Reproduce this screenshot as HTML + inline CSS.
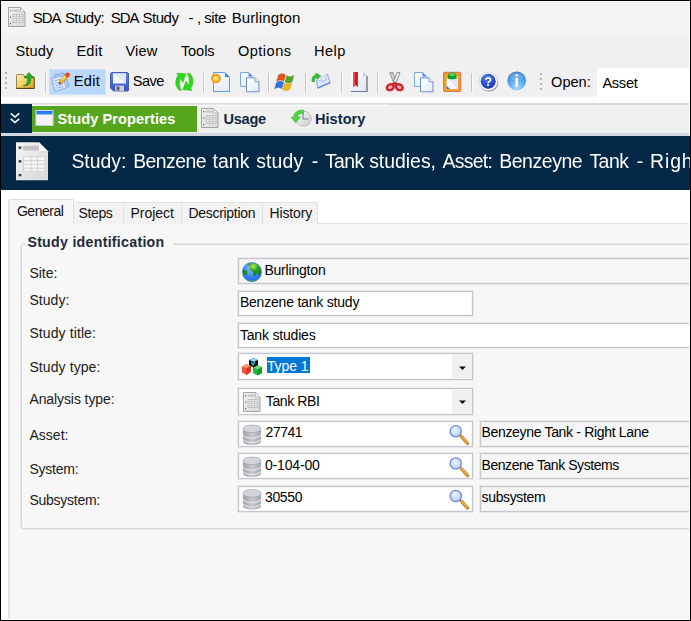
<!DOCTYPE html>
<html>
<head>
<meta charset="utf-8">
<title>SDA Study</title>
<style>
html,body{margin:0;padding:0;}
body{width:691px;height:621px;overflow:hidden;background:#f7f7f7;font-family:"Liberation Sans",sans-serif;color:#000;}
#win{position:relative;width:691px;height:621px;overflow:hidden;background:#fff;}
.a{position:absolute;box-sizing:border-box;}
.t{position:absolute;white-space:nowrap;line-height:1;}
#frame{position:absolute;left:0;top:0;width:689px;height:619px;border:1px solid #000;z-index:50;}
.wl{position:absolute;background:#fff;z-index:48;}
.sep{position:absolute;top:73px;width:1px;height:19px;background:#c6c6c6;box-shadow:1px 0 0 #fbfbfb;}
.inp{position:absolute;box-sizing:border-box;border:1px solid #c6c6cd;background:#fff;box-shadow:0 0 0 1px rgba(198,198,208,0.28),inset 0 0 0 1px rgba(198,198,208,0.18);}
.ro{background:#f6f6f6;}
.ptab{position:absolute;box-sizing:border-box;top:202px;height:22px;background:#f2f2f2;border:1px solid #e1e1e1;border-bottom:none;}
svg{position:absolute;overflow:visible;}
#soft{position:absolute;left:0;top:0;width:691px;height:621px;filter:blur(0.4px);}
.w{position:absolute;top:0;white-space:nowrap;line-height:1;}

</style>
</head>
<body>
<div id="win">
<div id="soft">
<div class="a" style="left:0;top:0;width:691px;height:34px;background:#f3f3f3"></div>
<div class="a" style="left:0;top:34px;width:691px;height:63px;background:linear-gradient(#f3f3f3,#f0f0f0 5px)"></div>
<div class="a" style="left:0;top:97px;width:691px;height:6px;background:#fff"></div>
<div class="a" style="left:0;top:103px;width:691px;height:33px;background:#f0f0f0;border-top:2px solid #d7dade;border-bottom:3px solid #d3d9df"></div>
<div class="a" style="left:0;top:104px;width:387px;height:1px;background:#e4e6e8"></div>
<div class="a" style="left:0;top:105px;width:387px;height:1px;background:#f9f9f9"></div>
<div class="a" style="left:0;top:136px;width:691px;height:54px;background:#042846"></div>
<div class="a" style="left:0;top:190px;width:691px;height:34px;background:#fff"></div>
<!-- toolbar -->
<div class="a" style="left:49px;top:69px;width:57px;height:26px;background:#b9d8fb;border:1px solid #cde3fb"></div>
<div class="a" style="left:597px;top:68px;width:94px;height:30px;background:#fff"></div>
<div class="sep" style="left:45px"></div>
<div class="sep" style="left:203px"></div>
<div class="sep" style="left:268px"></div>
<div class="sep" style="left:305px"></div>
<div class="sep" style="left:341px"></div>
<div class="sep" style="left:377px"></div>
<div class="sep" style="left:471px"></div>
<!-- nav -->
<div class="a" style="left:0;top:104px;width:32px;height:29px;background:#042846"></div>
<div class="a" style="left:32px;top:106px;width:165px;height:26px;background:#56a61d"></div>
<!-- page + tabs -->
<div class="a" style="left:8px;top:223px;width:690px;height:400px;background:#f7f7f7;border:1px solid #e0e0e0;border-left:2px solid #e3e5e8"></div>
<div class="ptab" style="left:73px;width:51px"></div>
<div class="ptab" style="left:123px;width:59px"></div>
<div class="ptab" style="left:181px;width:82px"></div>
<div class="ptab" style="left:262px;width:56px"></div>
<div class="a" style="left:8px;top:199px;width:66px;height:26px;background:#f7f7f7;border:1px solid #dedede;border-left:2px solid #e3e5e8;border-bottom:none;border-radius:2px 2px 0 0"></div>
<!-- group box -->
<div class="a" style="left:20px;top:243px;width:690px;height:287px;border:1px solid #e6e8ec;border-radius:4px;box-shadow:inset 0 0 0 1px #d4d8de"></div>
<div class="a" style="left:25px;top:240px;width:148px;height:8px;background:#f7f7f7"></div>
<!-- fields -->
<div class="inp ro" style="left:238px;top:258px;width:470px;height:26px"></div>
<div class="inp" style="left:238px;top:291px;width:235px;height:25px"></div>
<div class="inp" style="left:238px;top:323px;width:470px;height:25px"></div>
<div class="inp" style="left:238px;top:353px;width:235px;height:27px"></div>
<div class="a" style="left:452px;top:354px;width:20px;height:25px;background:#f0f0f0"></div>
<div class="a" style="left:267px;top:357px;width:42.500px;height:16px;background:#0078d7"></div>
<div class="inp" style="left:238px;top:388px;width:235px;height:27px"></div>
<div class="a" style="left:452px;top:389px;width:20px;height:25px;background:#f0f0f0"></div>
<div class="inp" style="left:238px;top:421px;width:235px;height:26px"></div>
<div class="inp" style="left:238px;top:453px;width:235px;height:26px"></div>
<div class="inp" style="left:238px;top:486px;width:235px;height:26px"></div>
<div class="inp ro" style="left:480px;top:421px;width:230px;height:26px"></div>
<div class="inp ro" style="left:480px;top:453px;width:230px;height:26px"></div>
<div class="inp ro" style="left:480px;top:486px;width:230px;height:26px"></div>

<svg class="a" style="left:0;top:0;z-index:5" width="691" height="621" viewBox="0 0 691 621">
<defs>
<linearGradient id="gFold" x1="0" y1="0" x2="0" y2="1"><stop offset="0" stop-color="#f6e38a"/><stop offset="1" stop-color="#d9b23c"/></linearGradient>
<linearGradient id="gBlue" x1="0" y1="0" x2="0" y2="1"><stop offset="0" stop-color="#5d83e6"/><stop offset="1" stop-color="#3457c4"/></linearGradient>
<linearGradient id="gPage" x1="0" y1="0" x2="1" y2="1"><stop offset="0" stop-color="#ffffff"/><stop offset="1" stop-color="#dfe9fb"/></linearGradient>
<linearGradient id="gGray" x1="0" y1="0" x2="1" y2="1"><stop offset="0" stop-color="#f4f4f4"/><stop offset="1" stop-color="#d8d8d8"/></linearGradient>
<radialGradient id="gHelp" cx="0.4" cy="0.3" r="0.8"><stop offset="0" stop-color="#4f7df0"/><stop offset="1" stop-color="#1030a8"/></radialGradient>
<radialGradient id="gInfo" cx="0.5" cy="0.85" r="0.85"><stop offset="0" stop-color="#a8dcff"/><stop offset="0.55" stop-color="#56a6ea"/><stop offset="1" stop-color="#2a72c8"/></radialGradient>
<radialGradient id="gGlobe" cx="0.45" cy="0.3" r="0.8"><stop offset="0" stop-color="#8fc4ff"/><stop offset="0.6" stop-color="#2f7df2"/><stop offset="1" stop-color="#2a62d8"/></radialGradient>
<radialGradient id="gLand" cx="0.45" cy="0.25" r="0.7"><stop offset="0" stop-color="#b6ee5a"/><stop offset="0.5" stop-color="#2ea01c"/><stop offset="1" stop-color="#157a10"/></radialGradient>
<linearGradient id="gDb" x1="0" y1="0" x2="1" y2="0"><stop offset="0" stop-color="#9d9da8"/><stop offset="0.5" stop-color="#c9c9d2"/><stop offset="1" stop-color="#a4a4ae"/></linearGradient>
<radialGradient id="gLens" cx="0.4" cy="0.35" r="0.7"><stop offset="0" stop-color="#e8f3ff"/><stop offset="1" stop-color="#b5d3fb"/></radialGradient>
<linearGradient id="gClock" x1="0" y1="0" x2="1" y2="1"><stop offset="0" stop-color="#ffffff"/><stop offset="1" stop-color="#c8c8c8"/></linearGradient>
<linearGradient id="gPage2" x1="0" y1="0" x2="1" y2="1"><stop offset="0" stop-color="#ffffff"/><stop offset="1" stop-color="#dde3f1"/></linearGradient>
<linearGradient id="gFold2" x1="0" y1="0" x2="1" y2="1"><stop offset="0" stop-color="#fdf3bb"/><stop offset="0.500" stop-color="#f2cf62"/><stop offset="1" stop-color="#dc9a2a"/></linearGradient>
<g id="db">
  <path d="M0 3.500v13c0 2 4 3.500 9 3.500s9-1.500 9-3.500v-13z" fill="url(#gDb)"/>
  <path d="M0 9.500c0 2 4 3.500 9 3.500s9-1.500 9-3.500" fill="none" stroke="#e6e6ec" stroke-width="1.200"/>
  <path d="M0 14c0 2 4 3.500 9 3.500s9-1.500 9-3.500" fill="none" stroke="#e6e6ec" stroke-width="1.200"/>
  <ellipse cx="9" cy="3.800" rx="9" ry="3.800" fill="#d4d4dc"/>
  <ellipse cx="9" cy="3.800" rx="9" ry="3.800" fill="none" stroke="#a6a6b2" stroke-width="0.700"/>
</g>
<g id="lens">
  <path d="M5.500 5.200l6.300 6.800" stroke="#c9882a" stroke-width="3.400" stroke-linecap="round"/>
  <path d="M5.800 5l6 6.500" stroke="#eeb54e" stroke-width="1.200" stroke-linecap="round"/>
  <circle cx="0" cy="0" r="5.600" fill="url(#gLens)" stroke="#6f83ee" stroke-width="1.300"/>
</g>
<g id="doc">
  <path d="M0.500 0.500h12l4.500 4.500v14.500h-16.500z" fill="url(#gGray)" stroke="#a2a2a2"/>
  <path d="M12.500 0.500v4.500h4.500z" fill="#fdfdfd" stroke="#a8a8a8" stroke-width="0.800"/>
  <rect x="4.500" y="2.500" width="7" height="2.200" fill="#c6c6c6"/>
  <rect x="5" y="7.500" width="10" height="8" fill="#eaeaea" stroke="#b8b8b8" stroke-width="0.800"/>
  <path d="M5 9.500h10M5 11.500h10M5 13.500h10M8.500 7.500v8M11.500 7.500v8" stroke="#c0c0c0" stroke-width="0.800"/>
  <path d="M2 3h1.200v1.200H2zM2 9.500h1.200v1.200H2zM2 16h1.200v1.200H2z" fill="#666"/>
</g>
<g id="copy">
  <path d="M0.500 0.500h8l4 4v10h-12z" fill="url(#gPage)" stroke="#7aa6ee"/>
  <path d="M8.500 0.500l4 4h-4z" fill="#4f8ae8"/>
  <path d="M6.500 5.800h8.500l4 4v10h-12.500z" fill="url(#gPage)" stroke="#6f8fc8"/>
  <path d="M15 5.800v4h4" fill="#eef3fc" stroke="#6f8fc8" stroke-width="0.800"/>
</g>
</defs>

<!-- title icon -->
<g transform="translate(8,7)"><use href="#doc"/></g>

<!-- toolbar grips -->
<g fill="#b4b4b4">
 <rect x="5" y="72" width="2" height="2"/><rect x="5" y="77" width="2" height="2"/><rect x="5" y="82" width="2" height="2"/><rect x="5" y="87" width="2" height="2"/>
 <rect x="540" y="73" width="2" height="2"/><rect x="540" y="78" width="2" height="2"/><rect x="540" y="83" width="2" height="2"/><rect x="540" y="88" width="2" height="2"/>
</g>

<!-- folder up -->
<g>
  <path d="M16.500 75.500c0-0.600 0.400-1 1-1h5.500c0.600 0 1 0.400 1 1v1h9.300c0.600 0 1 0.400 1 1v10.700h-17.800z" fill="url(#gFold2)" stroke="#8a6a22" stroke-width="0.800"/>
  <path d="M16.300 88.500h18.200" stroke="#5e430f" stroke-width="1"/>
  <path d="M34.300 77.500v11" stroke="#6f5114" stroke-width="0.800"/>
  <path d="M23.200 85.600C27 85 28 82 27.600 78h-3.300l4.700-5.600 4.700 5.600h-2.900c0.500 5.500-2.500 8.500-7.600 7.600z" fill="#2aa828" stroke="#14781a" stroke-width="0.600"/>
</g>

<!-- edit icon -->
<g>
  <path d="M54.500 75.300l9-2.300 5.500 13-10.500 4z" fill="#b9cff6" stroke="#6f92e0" stroke-width="0.800"/>
  <path d="M51.500 78.500l10-2.600 5.200 11.800-11.500 3.700z" fill="#dbe7fc" stroke="#7b9ce4" stroke-width="0.800"/>
  <path d="M54 81l6.500-1.800M55 83.500l7-2M56 86l7-2M57 88.300l6.500-1.900" stroke="#8aa8ea" stroke-width="0.900"/>
  <path d="M59 84l1-3.600 6.200-6.400 2.700 2.600-6.300 6.400z" fill="#f5b422" stroke="#c27a10" stroke-width="0.600"/>
  <path d="M61.300 79.200l5-5.200 1.200 1.200-5.200 5.200z" fill="#fbe07a"/>
  <path d="M59 84l0.600-2 1.400 1.400z" fill="#222"/>
  <circle cx="67.500" cy="74.800" r="2.400" fill="#ee4423"/>
</g>

<!-- save icon -->
<g transform="translate(110,72)">
  <path d="M0.500 2c0-0.800 0.700-1.500 1.500-1.500h15c0.800 0 1.500 0.700 1.500 1.500v16c0 0.600-0.400 1-1 1h-14l-3-3z" fill="url(#gBlue)" stroke="#3c50b4" stroke-width="0.900"/>
  <rect x="3" y="1.500" width="13" height="10" fill="#f4f7ff"/>
  <path d="M3 1.500h13v10z" fill="#dfe7fb"/>
  <rect x="5" y="13.500" width="9" height="5.500" fill="#c9ccd6"/>
  <rect x="6.500" y="14.500" width="3" height="4" fill="#5a5f78"/>
</g>

<!-- refresh -->
<g transform="translate(170,66)" fill="#2fd81f" stroke="#27b81c" stroke-width="0.500">
  <path id="rarr" d="M9.500 24.500C5 21 4.500 14 8 9.500L6.800 7.200L16 7.800L12.800 16.500L10.800 12.500C9 15 9 20 11.500 24.200Z"/>
  <use href="#rarr" transform="rotate(180 14.400 15.800)"/>
</g>

<!-- new doc -->
<g transform="translate(211,72)">
  <path d="M2.500 0.500h11.500l4.500 4.500v14.500h-16z" fill="url(#gPage)" stroke="#5f9cf0" stroke-width="1"/>
  <path d="M14 0.500l4.500 4.500h-4.500z" fill="#3f86ea"/>
  <circle cx="5" cy="6.500" r="4.800" fill="#f7941d"/>
  <circle cx="5" cy="6.500" r="3" fill="#ffd43a"/>
  <circle cx="4.600" cy="6" r="1.400" fill="#fff6b0"/>
</g>

<!-- copy 1 -->
<g transform="translate(240,72)"><use href="#copy"/></g>

<!-- windows flag -->
<g transform="translate(276,72.500)">
  <path d="M2.500 2.500c2.500-1.800 4.800-1.800 7 0l-1.800 6.300c-2.200-1.800-4.500-1.800-7 0z" fill="#e5551e" stroke="#a8451f" stroke-width="0.400"/>
  <path d="M10.800 3.200c2.200 1.500 4.500 1.500 7-0.200l-1.800 6.300c-2.500 1.700-4.800 1.700-7 0.200z" fill="#58a51a" stroke="#3d7d14" stroke-width="0.400"/>
  <path d="M0.300 10c2.500-1.800 4.800-1.800 7 0l-1.800 6.300c-2.200-1.800-4.500-1.800-7 0z" fill="#3470e2" stroke="#2a55b0" stroke-width="0.400" transform="translate(0.200,0)"/>
  <path d="M8.600 10.700c2.200 1.500 4.500 1.500 7-0.200l-1.800 6.300c-2.500 1.700-4.800 1.700-7 0.200z" fill="#ecb815" stroke="#b98d14" stroke-width="0.400"/>
</g>

<!-- mail -->
<g>
  <path d="M316.400 80L327.300 74.200L330.300 83L317.700 88.300Z" fill="#dbe7fb" stroke="#7f9be0" stroke-width="0.900"/>
  <path d="M316.400 80L324.500 81.300L327.300 74.200" fill="#f6f9ff" stroke="#a9bfee" stroke-width="0.700"/>
  <path d="M317.900 87.800L330 82.700" stroke="#6a88d6" stroke-width="1.300"/>
  <path d="M320 79.500l6-2.500M320.800 81.800l6-2.500" stroke="#a8c0f0" stroke-width="0.800"/>
  <path d="M312 81.500C311.500 77.500 313.500 75 316.500 74.800L316 73L320.600 75.800L317.200 79.300L316.900 77.500C315 77.700 314.300 79 314.500 81.500Z" fill="#35c22c" stroke="#1f9a1e" stroke-width="0.600"/>
</g>

<!-- bookmark doc -->
<g transform="translate(351,72)">
  <path d="M0 0h12l4 4v15.700h-16z" fill="url(#gPage2)"/>
  <path d="M12 0l4 4h-4z" fill="#b9d3f6"/>
  <path d="M16 4v15.700" stroke="#4a4a58" stroke-width="1"/>
  <path d="M0 19.500h16.500" stroke="#77779a" stroke-width="1"/>
  <path d="M2.200 0h4.700v15l-2.350-1.800-2.350 1.800z" fill="#e01018"/>
  <path d="M2.200 0h1.800v13.600l-1.800 1.400z" fill="#f2474c"/>
</g>

<!-- scissors -->
<g>
  <path d="M389.800 72.600L392.800 72.400L397.300 84.500L394.500 85.200Z" fill="#d6d6d6" stroke="#6d6d6d" stroke-width="0.700"/>
  <path d="M400 72.600L397 72.400L392.500 84.500L395.300 85.200Z" fill="#ececec" stroke="#6d6d6d" stroke-width="0.700"/>
  <ellipse cx="390.300" cy="87.200" rx="3.600" ry="2.800" fill="#f3b0b0" stroke="#d3202a" stroke-width="2.300" transform="rotate(-28 390.300 87.200)"/>
  <ellipse cx="399.300" cy="87.200" rx="3.600" ry="2.800" fill="#f3b0b0" stroke="#d3202a" stroke-width="2.300" transform="rotate(28 399.300 87.200)"/>
  <path d="M392.500 84.800l2.300-1.800 2.300 1.800" fill="none" stroke="#c81e28" stroke-width="1.800"/>
</g>

<!-- copy 2 -->
<g transform="translate(414,72)"><use href="#copy"/></g>

<!-- paste -->
<g>
  <rect x="443.500" y="72.300" width="17.300" height="19.200" rx="1" fill="#f39c1f" stroke="#cf6a5c" stroke-width="0.900"/>
  <rect x="446.600" y="76.500" width="11.200" height="12.600" fill="#f2f6fe"/>
  <path d="M446.600 76.500h11.200v12.600z" fill="#dfe8fa"/>
  <path d="M446.600 85.700l3.400 3.400h-3.400z" fill="#2f74e6"/>
  <path d="M447.400 78.600c0-4 1.800-6 4.700-6s4.700 2 4.700 6c0 1-9.400 1-9.400 0z" fill="#1f9a2a"/>
  <ellipse cx="452.100" cy="74.600" rx="2.800" ry="1.500" fill="#5fd45a"/>
</g>

<!-- help -->
<g>
  <circle cx="489" cy="82.300" r="9.300" fill="#8d909e"/>
  <circle cx="488.300" cy="81.300" r="9.300" fill="#fbfbfd" stroke="#c3c6d2" stroke-width="0.600"/>
  <circle cx="488.200" cy="81.200" r="7.500" fill="url(#gHelp)"/>
  <text x="488.200" y="85.800" text-anchor="middle" font-family="Liberation Sans, sans-serif" font-weight="700" font-size="12.500" fill="#fff">?</text>
</g>

<!-- info -->
<g>
  <circle cx="516.700" cy="80.800" r="9.400" fill="url(#gInfo)"/>
  <ellipse cx="516.700" cy="76.500" rx="6.800" ry="4" fill="#ffffff" opacity="0.180"/>
  <rect x="515.500" y="78" width="2.400" height="8.800" fill="#fff"/>
  <circle cx="516.700" cy="75.300" r="1.400" fill="#fff"/>
</g>

<!-- nav: chevrons -->
<g fill="none" stroke="#fff" stroke-width="1.600">
  <path d="M10.800 113.300l4.200 3.700 4.200-3.700"/>
  <path d="M10.800 118.800l4.200 3.700 4.200-3.700"/>
</g>

<!-- nav: window icon -->
<g transform="translate(35.500,110)">
  <rect x="0.500" y="0.500" width="17" height="15" fill="#f3f3fb" stroke="#d5dcea"/>
  <rect x="1" y="1" width="16" height="3.500" fill="#2f86ee"/>
  <rect x="1" y="1" width="16" height="1.200" fill="#1f6fe0"/>
  <path d="M1 15.500h16.500v-11" fill="none" stroke="#c5c9d6" stroke-width="0.800"/>
</g>

<!-- nav: usage icon -->
<g transform="translate(201,108)"><use href="#doc"/></g>

<!-- nav: history icon -->
<g>
  <circle cx="303.600" cy="118.700" r="7.600" fill="url(#gClock)" stroke="#b4b4b4" stroke-width="0.900"/>
  <path d="M303 112.500V119H308.500" fill="none" stroke="#7d8a98" stroke-width="1.200"/>
  <path d="M303.500 110C298 109.500 294 112.500 293.500 117L291 117.300L295.800 122.800L300.500 116.800L297.300 117C297.800 114.500 300 113 303.500 113.300Z" fill="#4fd63c" stroke="#2fae26" stroke-width="0.500"/>
</g>

<!-- header icon -->
<g transform="translate(16,142.300)">
  <path d="M0 0h23l9 9v29h-32z" fill="url(#gGray)"/>
  <path d="M23 0v9h9z" fill="#fbfbfb"/>
  <path d="M23 9h9v1.500l-9-0.300z" fill="#cfcfcf" opacity="0.700"/>
  <rect x="7" y="3.500" width="16" height="4.700" fill="#c4c4c4"/>
  <rect x="7" y="14" width="22.500" height="15.400" fill="#d2d2d2"/>
  <g fill="#f5f5f5">
   <rect x="8" y="15" width="6.600" height="2.800"/><rect x="15.600" y="15" width="5.400" height="2.800"/><rect x="22" y="15" width="6.500" height="2.800"/>
   <rect x="8" y="18.800" width="6.600" height="2.800"/><rect x="15.600" y="18.800" width="5.400" height="2.800"/><rect x="22" y="18.800" width="6.500" height="2.800"/>
   <rect x="8" y="22.600" width="6.600" height="2.800"/><rect x="15.600" y="22.600" width="5.400" height="2.800"/><rect x="22" y="22.600" width="6.500" height="2.800"/>
   <rect x="8" y="26.400" width="6.600" height="2.200"/><rect x="15.600" y="26.400" width="5.400" height="2.200"/><rect x="22" y="26.400" width="6.500" height="2.200"/>
  </g>
  <rect x="2.700" y="4.200" width="2.600" height="2.400" fill="#3a3a3a"/>
  <rect x="2.700" y="17.800" width="2.600" height="2.400" fill="#3a3a3a"/>
  <rect x="2.700" y="31.600" width="2.600" height="2.400" fill="#3a3a3a"/>
</g>

<!-- globe -->
<g transform="translate(242,262)">
  <circle cx="9.900" cy="10" r="9.800" fill="url(#gGlobe)"/>
  <path d="M5 2.500c3-2 8-2 11.500 1 2 2 2.800 4.500 2.500 7-1 1-1.500 2.500-2.500 3-0.500-1.500-0.500-2.500-1.500-3-0.500 1.500-1.500 3-3 3.500-1-1.500-0.500-3.500-1.500-4.500s-2.500-0.500-3-2 1-2.500 0.500-3.500-2-0.500-3-1.500z" fill="url(#gLand)"/>
  <path d="M0.800 8c1.500-0.500 3.500 0 4.500 1.500 0.500 1.500-0.500 3-2 4-1.500-0.500-2.800-3-2.500-5.500z" fill="#1f8a18"/>
  <path d="M6 18.500c2.500-1 5.500-1 8 0-2.500 1.500-5.500 1.500-8 0z" fill="#3aa64a"/>
  <circle cx="9.900" cy="10" r="9.500" fill="none" stroke="#4a78dc" stroke-width="0.700" opacity="0.800"/>
</g>

<!-- type icon (cubes) -->
<g transform="translate(242,358)">
  <path d="M4.500 6l4.500 1.500v6l-4.500 3.500-4.500-2.500v-6z" fill="#f0583a"/>
  <path d="M4.500 6l4.500 1.500-4.500 2.500-4.500-1.500z" fill="#f9a36a"/>
  <path d="M4.500 10v7l4.500-3.500v-6z" fill="#d43a2a"/>
  <path d="M15.500 7l4.500 2v6l-4.500 2.500-4.500-2.500v-6z" fill="#22b53a"/>
  <path d="M15.500 7l4.500 2-4.500 2.500-4.500-2.500z" fill="#6fe07a"/>
  <path d="M15.500 11.500v6l4.500-2.500v-6z" fill="#169a2c"/>
  <path d="M11.500 0l4.500 2v5l-4.500 2.500-4.500-2.500v-5z" fill="#0c0c10"/>
  <path d="M11.500 0l4.500 2-4.500 1.800-4.500-1.800z" fill="#8fdcf5"/>
  <path d="M9.500 4l1.500 3 2-3.500" fill="none" stroke="#2fd0f0" stroke-width="1.200"/>
</g>

<!-- analysis doc icon -->
<g transform="translate(243,392)"><use href="#doc"/></g>

<!-- db icons -->
<g transform="translate(243,425)"><use href="#db"/></g>
<g transform="translate(243,457)"><use href="#db"/></g>
<g transform="translate(243,489.500)"><use href="#db"/></g>

<!-- lens icons -->
<g transform="translate(455.800,431.300)"><use href="#lens"/></g>
<g transform="translate(455.800,463.500)"><use href="#lens"/></g>
<g transform="translate(455.800,496)"><use href="#lens"/></g>

<!-- combo arrows -->
<path d="M459 366.500h7l-3.500 3.500z" fill="#111"/>
<path d="M459 400.500h7l-3.500 3.500z" fill="#111"/>
</svg>

<div class="t" style="left:0;top:10.00px;font-size:15px;width:691px;height:15px;"><span class="w" style="left:32.65px;letter-spacing:-0.998px;">SDA</span> <span class="w" style="left:64.9px;letter-spacing:-0.53px;">Study:</span> <span class="w" style="left:110.65px;letter-spacing:-0.998px;">SDA</span> <span class="w" style="left:142.4px;letter-spacing:-0.452px;">Study</span> <span class="w" style="left:188.5px;letter-spacing:-0.8px;">-</span> <span class="w" style="left:197px;letter-spacing:-1.672px;">,</span> <span class="w" style="left:204.15px;letter-spacing:-0.373px;">site</span> <span class="w" style="left:231.65px;letter-spacing:0.13px;">Burlington</span></div>
<div class="t" style="left:15.4px;top:44.00px;font-size:14.6px;letter-spacing:0.154px;">Study</div>
<div class="t" style="left:76.4px;top:44.00px;font-size:14.6px;letter-spacing:0.236px;">Edit</div>
<div class="t" style="left:125.4px;top:44.00px;font-size:14.6px;letter-spacing:0.181px;">View</div>
<div class="t" style="left:180.9px;top:44.00px;font-size:14.6px;letter-spacing:-0.096px;">Tools</div>
<div class="t" style="left:237.9px;top:44.00px;font-size:14.6px;letter-spacing:0.472px;">Options</div>
<div class="t" style="left:313.9px;top:44.00px;font-size:14.6px;letter-spacing:0.521px;">Help</div>
<div class="t" style="left:73.7px;top:74.00px;font-size:14.6px;letter-spacing:0.361px;">Edit</div>
<div class="t" style="left:132.7px;top:74.00px;font-size:14.6px;letter-spacing:-0.541px;">Save</div>
<div class="t" style="left:551.1px;top:75.00px;font-size:14.6px;letter-spacing:-0.033px;">Open:</div>
<div class="t" style="left:602.4px;top:76.00px;font-size:14.6px;letter-spacing:-0.28px;">Asset</div>
<div class="t" style="left:57.4px;top:112.00px;font-size:14.6px;font-weight:700;color:#fff;letter-spacing:0.082px;">Study Properties</div>
<div class="t" style="left:223.4px;top:112.00px;font-size:14.6px;font-weight:700;color:#0e2a47;letter-spacing:-0.242px;">Usage</div>
<div class="t" style="left:314.9px;top:112.00px;font-size:14.6px;font-weight:700;color:#0e2a47;letter-spacing:0.046px;">History</div>
<div class="t" style="left:0;top:152.00px;font-size:19.4px;width:691px;height:19.4px;color:#fff;"><span class="w" style="left:71.4px;letter-spacing:0.019px;">Study:</span> <span class="w" style="left:133.15px;letter-spacing:-0.53px;">Benzene</span> <span class="w" style="left:212.4px;letter-spacing:0.111px;">tank</span> <span class="w" style="left:256.15px;letter-spacing:0.198px;">study</span> <span class="w" style="left:311.75px;letter-spacing:-0.219px;">-</span> <span class="w" style="left:324.9px;letter-spacing:-0.592px;">Tank</span> <span class="w" style="left:369.15px;letter-spacing:0.003px;">studies,</span> <span class="w" style="left:442.4px;letter-spacing:-0.673px;">Asset:</span> <span class="w" style="left:499.15px;letter-spacing:-0.394px;">Benzeyne</span> <span class="w" style="left:589.4px;letter-spacing:-0.467px;">Tank</span> <span class="w" style="left:636.75px;letter-spacing:-0.219px;">-</span> <span class="w" style="left:650.1px;letter-spacing:0.864px;">Right</span> <span class="w" style="left:706.4px;letter-spacing:0.74px;">Lane</span></div>
<div class="t" style="left:16.9px;top:204.00px;font-size:14px;color:#111;letter-spacing:-0.459px;">General</div>
<div class="t" style="left:78.4px;top:206.00px;font-size:14px;color:#111;letter-spacing:-0.342px;">Steps</div>
<div class="t" style="left:130.4px;top:206.00px;font-size:14px;color:#111;letter-spacing:0.003px;">Project</div>
<div class="t" style="left:188.4px;top:206.00px;font-size:14px;color:#111;letter-spacing:-0.289px;">Description</div>
<div class="t" style="left:269.4px;top:206.00px;font-size:14px;color:#111;letter-spacing:-0.102px;">History</div>
<div class="t" style="left:27.4px;top:235.00px;font-size:14.2px;font-weight:700;color:#1e2a3a;letter-spacing:0.273px;">Study identification</div>
<div class="t" style="left:29.4px;top:266.00px;font-size:14px;color:#202020;letter-spacing:0.017px;">Site:</div>
<div class="t" style="left:29.4px;top:293.00px;font-size:14px;color:#202020;letter-spacing:0.066px;">Study:</div>
<div class="t" style="left:29.4px;top:326.00px;font-size:14px;color:#202020;letter-spacing:0.102px;">Study title:</div>
<div class="t" style="left:29.4px;top:360.00px;font-size:14px;color:#202020;letter-spacing:0.096px;">Study type:</div>
<div class="t" style="left:29.4px;top:392.00px;font-size:14px;color:#202020;letter-spacing:-0.091px;">Analysis type:</div>
<div class="t" style="left:29.4px;top:428.00px;font-size:14px;color:#202020;letter-spacing:0.032px;">Asset:</div>
<div class="t" style="left:29.4px;top:462.00px;font-size:14px;color:#202020;letter-spacing:-0.211px;">System:</div>
<div class="t" style="left:29.4px;top:493.00px;font-size:14px;color:#202020;letter-spacing:-0.254px;">Subsystem:</div>
<div class="t" style="left:264.4px;top:263.00px;font-size:14px;letter-spacing:-0.195px;">Burlington</div>
<div class="t" style="left:239.9px;top:295.00px;font-size:14px;letter-spacing:-0.202px;">Benzene tank study</div>
<div class="t" style="left:239.9px;top:328.00px;font-size:14px;letter-spacing:-0.186px;">Tank studies</div>
<div class="t" style="left:266.9px;top:359.00px;font-size:14px;color:#fff;letter-spacing:-0.072px;">Type 1</div>
<div class="t" style="left:265.8px;top:394.00px;font-size:14px;letter-spacing:-0.402px;">Tank RBI</div>
<div class="t" style="left:265.6px;top:425.00px;font-size:14px;letter-spacing:-0.467px;">27741</div>
<div class="t" style="left:265.0px;top:458.00px;font-size:14px;letter-spacing:-0.181px;">0-104-00</div>
<div class="t" style="left:265.0px;top:490.00px;font-size:14px;letter-spacing:-0.367px;">30550</div>
<div class="t" style="left:481.5px;top:425.00px;font-size:14px;letter-spacing:-0.328px;">Benzeyne Tank - Right Lane</div>
<div class="t" style="left:481.5px;top:458.00px;font-size:14px;letter-spacing:-0.435px;">Benzene Tank Systems</div>
<div class="t" style="left:481.6px;top:490.00px;font-size:14px;letter-spacing:-0.369px;">subsystem</div>
</div>
<div class="wl" style="left:1px;top:1px;width:689px;height:1px"></div><div class="wl" style="left:689px;top:1px;width:1px;height:135px"></div><div class="wl" style="left:689px;top:190px;width:1px;height:430px"></div><div class="wl" style="left:1px;top:619px;width:689px;height:1px"></div>
<div id="frame"></div>
</div>
</body>
</html>
